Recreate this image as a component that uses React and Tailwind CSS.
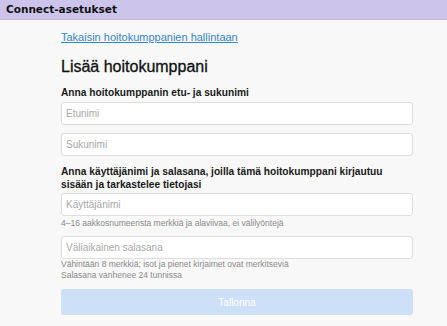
import React from "react";

const FIELD_CLS =
  "block w-full h-[23px] rounded-[3px] border border-[#dedede] bg-white px-[4px] text-[10px] text-[#333] placeholder:text-[#a8a8a8] outline-none";

function Field({ placeholder, className = "" }) {
  return <input type="text" placeholder={placeholder} className={`${FIELD_CLS} ${className}`} />;
}

export default function App() {
  return (
    <div className="min-h-[326px] w-[447px] bg-[#f8f8f8] font-['Liberation_Sans',Arial,sans-serif] text-[#1a1a1a]">
      {/* Top bar */}
      <div className="flex h-[20px] items-center border-b border-[#c2b9e2] bg-[#cdc4ec] pl-[6px]">
        <span className="font-['DejaVu_Sans',Verdana,sans-serif] text-[10.5px] font-bold text-[#111]">
          Connect-asetukset
        </span>
      </div>

      <div className="ml-[61px] w-[352px]">
        <a
          href="#"
          className="mt-[11px] block w-max text-[11px] leading-[13px] text-[#3586c8] underline"
        >
          Takaisin hoitokumppanien hallintaan
        </a>

        <h1 className="mt-[13px] text-[16px] leading-[19px] text-[#111] [-webkit-text-stroke:0.3px_#111]">
          Lisää hoitokumppani
        </h1>

        <p className="mt-[11px] text-[10.2px] font-bold leading-[12px]">
          Anna hoitokumppanin etu- ja sukunimi
        </p>
        <Field placeholder="Etunimi" className="mt-[3px]" />
        <Field placeholder="Sukunimi" className="mt-[8px]" />

        <p className="mt-[9px] text-[10.2px] font-bold leading-[13px]">
          Anna käyttäjänimi ja salasana, joilla tämä hoitokumppani kirjautuu sisään ja tarkastelee tietojasi
        </p>
        <Field placeholder="Käyttäjänimi" className="mt-[2px]" />
        <p className="mt-[2px] text-[8.5px] leading-[11px] text-[#8a8a8a]">
          4–16 aakkosnumeerista merkkiä ja alaviivaa, ei välilyöntejä
        </p>

        <Field placeholder="Väliaikainen salasana" className="mt-[7px]" />
        <p className="text-[8.5px] leading-[11px] text-[#8a8a8a]">
          Vähintään 8 merkkiä; isot ja pienet kirjaimet ovat merkitseviä
          <br />
          Salasana vanhenee 24 tunnissa
        </p>

        <button
          type="button"
          className="mt-[8px] block h-[26px] w-full rounded-[3px] bg-[#cde0f8] text-[10px] text-white"
        >
          Tallonna
        </button>
      </div>
    </div>
  );
}
